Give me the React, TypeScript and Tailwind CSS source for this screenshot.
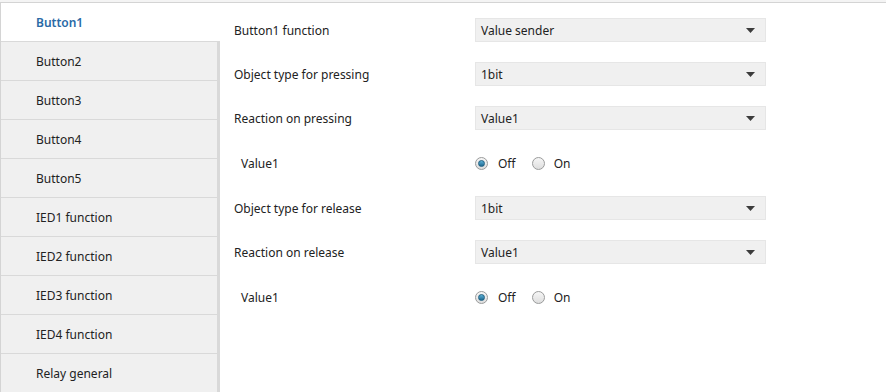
import React from "react";

const items = [
  "Button1",
  "Button2",
  "Button3",
  "Button4",
  "Button5",
  "IED1 function",
  "IED2 function",
  "IED3 function",
  "IED4 function",
  "Relay general",
];

function Select({ value }: { value: string }) {
  return (
    <div className="flex h-[24px] w-[291px] items-center justify-between border border-[#e6e6e6] bg-[#f0f0f0] pl-[5px] pr-[10px] pt-[1px]">
      <span>{value}</span>
      <svg width="9" height="5" viewBox="0 0 9 5">
        <path d="M0 0 H9 L4.5 5 Z" fill="#3c3c3c" />
      </svg>
    </div>
  );
}

function Radio({ checked }: { checked: boolean }) {
  return (
    <span className="flex h-[13px] w-[13px] items-center justify-center rounded-full border border-[#9a9b9b] bg-gradient-to-b from-[#f6f6f6] to-[#dedede]">
      {checked && (
        <span className="h-[7px] w-[7px] rounded-full bg-gradient-to-b from-[#5bb0d6] to-[#1d6a92] border border-[#1f5f80]" />
      )}
    </span>
  );
}

function Row({
  label,
  children,
  indent,
  className,
}: {
  label: string;
  children: React.ReactNode;
  indent?: boolean;
  className?: string;
}) {
  return (
    <div className={"flex h-[24px] items-center " + (className ?? "")}>
      <div className={indent ? "w-[255px] pl-[21px] pt-[1px]" : "w-[255px] pl-[14px] pt-[1px]"}>{label}</div>
      {children}
    </div>
  );
}

function Radios() {
  return (
    <div className="flex items-center pt-[1px]">
      <div><Radio checked /></div>
      <span className="ml-[10px]">Off</span>
      <div className="ml-[16px]"><Radio checked={false} /></div>
      <span className="ml-[9px]">On</span>
    </div>
  );
}

export default function App() {
  return (
    <div
      className="h-[392px] w-[886px] overflow-hidden bg-white text-[12px] text-[#222222]"
      style={{ fontFamily: '"Noto Sans", "Open Sans", sans-serif' }}
    >
      <div className="h-[3px] border-b border-[#d4d4d4] bg-[#f4f4f4]" />
      <div className="flex">
        <div className="w-[220px] shrink-0 border-l border-[#d4d4d4]">
          {items.map((it, i) =>
            i === 0 ? (
              <div
                key={it}
                className="flex h-[39px] items-center border-b border-[#d9d9d9] bg-white pl-[35px] pt-[1px] font-semibold text-[#2a6aa6]"
              >
                {it}
              </div>
            ) : (
              <div
                key={it}
                className="flex h-[39px] items-center border-b border-r-[3px] border-[#d9d9d9] bg-[#f0f0f0] pl-[35px] pt-[1px]"
              >
                {it}
              </div>
            )
          )}
        </div>
        <div className="flex flex-col pt-[15px]">
          <Row label="Button1 function"><Select value="Value sender" /></Row>
          <Row label="Object type for pressing" className="mt-[20px]"><Select value="1bit" /></Row>
          <Row label="Reaction on pressing" className="mt-[20px]"><Select value="Value1" /></Row>
          <Row label="Value1" indent className="mt-[21px]"><Radios /></Row>
          <Row label="Object type for release" className="mt-[21px]"><Select value="1bit" /></Row>
          <Row label="Reaction on release" className="mt-[20px]"><Select value="Value1" /></Row>
          <Row label="Value1" indent className="mt-[21px]"><Radios /></Row>
        </div>
      </div>
    </div>
  );
}
